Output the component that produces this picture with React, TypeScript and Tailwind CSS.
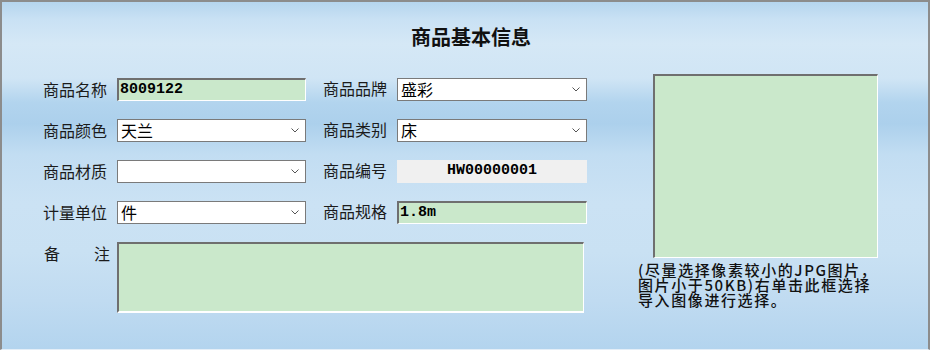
import { ReactNode } from 'react';

const cjk = "font-['Noto_Sans_CJK_SC','Noto_Sans',sans-serif]";
const mono = "font-['Liberation_Mono','Noto_Sans_CJK_SC',monospace]";

function Label({ children }: { children: ReactNode }) {
  return <span className={`${cjk} text-[16px] leading-[23px] text-[#1b1b1b] whitespace-nowrap`}>{children}</span>;
}

function GreenInput({ value, className = '' }: { value: string; className?: string }) {
  return (
    <div
      className={`h-[23px] bg-[#cae8cb] border-t-2 border-l-2 border-b border-r border-t-[#6f6f6f] border-l-[#6f6f6f] border-b-white border-r-white pl-[1px] ${mono} font-bold text-[15px] leading-[19px] text-black ${className}`}
    >
      {value}
    </div>
  );
}

function Select({ value }: { value: string }) {
  return (
    <div className="h-[23px] bg-white border border-[#7a7a7a] flex items-center justify-between pl-[3px] pr-[6px]">
      <span className={`${cjk} text-[16px] leading-[21px] text-black`}>{value}</span>
      <svg width="8" height="5" viewBox="0 0 8 5" className="text-[#555]">
        <path d="M0.5 0.5 L4 4 L7.5 0.5" fill="none" stroke="currentColor" strokeWidth="1" />
      </svg>
    </div>
  );
}

const captionLines = ['(尽量选择像素较小的JPG图片，', '图片小于50KB)右单击此框选择', '导入图像进行选择。'];

export default function App() {
  return (
    <div
      className="w-[930px] h-[350px] border-t-2 border-l-2 border-r-2 border-b border-t-[#8c8c8c] border-l-[#8c8c8c] border-r-[#8c8c8c] border-b-[#e4eef7] bg-[linear-gradient(180deg,#b5d5ee_0%,#c9e1f4_5%,#d5e8f6_12%,#d0e5f5_22%,#b2d4ee_29%,#acd0ec_35%,#c2ddf2_44%,#cbe2f4_58%,#c9e1f3_72%,#c0dbf1_86%,#b3d4ee_100%)] overflow-hidden"
    >
      <div className={`${cjk} pt-[21px] pl-[12px] text-center text-[20px] leading-[28px] font-bold text-[#111]`}>
        商品基本信息
      </div>

      <div className="flex mt-[23px] pl-[41px]">
        <div className="pt-[3px]">
          <div className="grid grid-cols-[67px_196px_82px_199px] gap-y-[17px] items-center">
            <Label>商品名称</Label>
            <GreenInput value="8009122" className="ml-[7px] w-[189px]" />
            <span className="pl-[17px]"><Label>商品品牌</Label></span>
            <div className="ml-[9px] w-[190px]"><Select value="盛彩" /></div>

            <Label>商品颜色</Label>
            <div className="ml-[7px] w-[189px]"><Select value="天兰" /></div>
            <span className="pl-[17px]"><Label>商品类别</Label></span>
            <div className="ml-[9px] w-[190px]"><Select value="床" /></div>

            <Label>商品材质</Label>
            <div className="ml-[7px] w-[189px]"><Select value="" /></div>
            <span className="pl-[17px]"><Label>商品编号</Label></span>
            <div className={`ml-[9px] w-[190px] h-[23px] bg-[#f0f0f0] text-center ${mono} font-bold text-[15px] leading-[21px] text-black`}>
              HW00000001
            </div>

            <Label>计量单位</Label>
            <div className="ml-[7px] w-[189px]"><Select value="件" /></div>
            <span className="pl-[17px]"><Label>商品规格</Label></span>
            <GreenInput value="1.8m" className="ml-[9px] w-[190px]" />
          </div>

          <div className="flex mt-[18px]">
            <div className="w-[67px] flex justify-between items-start pl-[1px]">
              <Label>备</Label>
              <Label>注</Label>
            </div>
            <div className="ml-[7px] w-[467px] h-[71px] bg-[#cae8cb] border-t-2 border-l-2 border-b-2 border-r border-t-[#6f6f6f] border-l-[#6f6f6f] border-b-white border-r-white" />
          </div>
        </div>

        <div className="ml-[51px] flex flex-col">
          <div className="ml-[15px] w-[225px] h-[184px] bg-[#cae8cb] border-t-2 border-l-2 border-b border-r border-t-[#6f6f6f] border-l-[#6f6f6f] border-b-white border-r-white" />
          <div className="mt-[4px] flex flex-col">
            {captionLines.map((line) => (
              <div
                key={line}
                className={`${cjk} h-[15px] text-[15px] leading-[15px] font-medium text-[#111] whitespace-nowrap tracking-[1.6px]`}
              >
                {line}
              </div>
            ))}
          </div>
        </div>
      </div>
    </div>
  );
}
